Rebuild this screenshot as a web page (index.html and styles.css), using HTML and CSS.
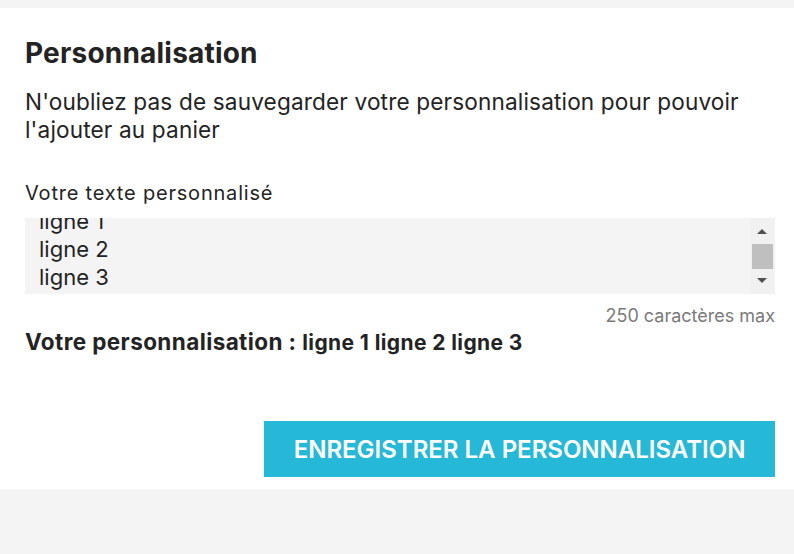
FILE: index.html
```html
<!DOCTYPE html>
<html lang="fr">
<head>
    <meta charset="UTF-8">
    <meta name="viewport" content="width=device-width, initial-scale=1.0">
    <title>Personnalisation</title>
    <link rel="stylesheet" href="styles.css">
</head>
<body>
    <div class="card">
        <h2 class="title">Personnalisation</h2>
        <p class="intro">N'oubliez pas de sauvegarder votre personnalisation pour pouvoir l'ajouter au panier</p>
        <form class="custom-form">
            <label for="textField" class="field-label">Votre texte personnalisé</label>
            <div class="textarea-wrap">
                <textarea id="textField" rows="3" maxlength="250">ligne 1
ligne 2
ligne 3</textarea>
                <div class="scrollbar">
                    <span class="arrow arrow-up"></span>
                    <span class="thumb"></span>
                    <span class="arrow arrow-down"></span>
                </div>
            </div>
            <small class="max-chars">250 caractères max</small>
            <p class="current">Votre personnalisation : <span class="value">ligne 1 ligne 2 ligne 3</span></p>
            <div class="actions">
                <button type="button" class="save-btn">Enregistrer la personnalisation</button>
            </div>
        </form>
    </div>
    <script src="script.js"></script>
</body>
</html>
```

FILE: styles.css
```css
body {
    font-family: Inter, "Noto Sans", sans-serif;
    margin: 0;
    padding: 8px 0 0 0;
    background-color: #F4F4F4;
    color: #232323;
}
.card {
    background-color: #FFFFFF;
    padding: 28px 19px 12px 25px;
}
.title {
    font-size: 28px;
    font-weight: 700;
    line-height: 34px;
    letter-spacing: 0.2px;
    margin: 0 0 18px 0;
}
.intro {
    font-size: 22.6px;
    line-height: 28px;
    letter-spacing: 0.15px;
    margin: 0 0 37px 0;
}
.custom-form {
    display: flex;
    flex-direction: column;
}
.field-label {
    font-size: 20px;
    line-height: 24px;
    letter-spacing: 0.8px;
    margin-bottom: 13px;
}
.textarea-wrap {
    position: relative;
    display: flex;
}
textarea {
    flex: 1;
    font-family: inherit;
    font-size: 22px;
    line-height: 28px;
    color: #232323;
    background-color: #F4F4F4;
    border: none;
    padding: 6px 39px 6px 14px;
    height: 76px;
    box-sizing: border-box;
    resize: none;
    outline: none;
    scrollbar-width: none;
}
.scrollbar {
    position: absolute;
    top: 0;
    right: 0;
    width: 25px;
    height: 76px;
    background-color: #F1F1F1;
}
.arrow {
    position: absolute;
    left: 7px;
    width: 0;
    height: 0;
    border-left: 5.5px solid transparent;
    border-right: 5.5px solid transparent;
}
.arrow-up {
    top: 11px;
    border-bottom: 5px solid #505050;
}
.arrow-down {
    top: 60px;
    border-top: 5px solid #505050;
}
.thumb {
    position: absolute;
    top: 26px;
    left: 2px;
    width: 21px;
    height: 25px;
    background-color: #BFBFBF;
}
.max-chars {
    align-self: flex-end;
    font-size: 18px;
    line-height: 22px;
    color: #7A7A7A;
    margin-top: 11px;
}
.current {
    font-size: 22.5px;
    line-height: 26px;
    font-weight: 700;
    letter-spacing: 0.4px;
    margin: 2px 0 0 0;
}
.current .value {
    font-size: 21px;
}
.actions {
    display: flex;
    justify-content: flex-end;
    margin-top: 65px;
}
.save-btn {
    background-color: #25B9D7;
    color: #FFFFFF;
    border: none;
    font-family: inherit;
    font-size: 24px;
    font-weight: 600;
    text-transform: uppercase;
    height: 56px;
    width: 511px;
    padding: 0;
    cursor: pointer;
}
```

FILE: script.js
```js
document.getElementById('textField').scrollTop = 17;
```
